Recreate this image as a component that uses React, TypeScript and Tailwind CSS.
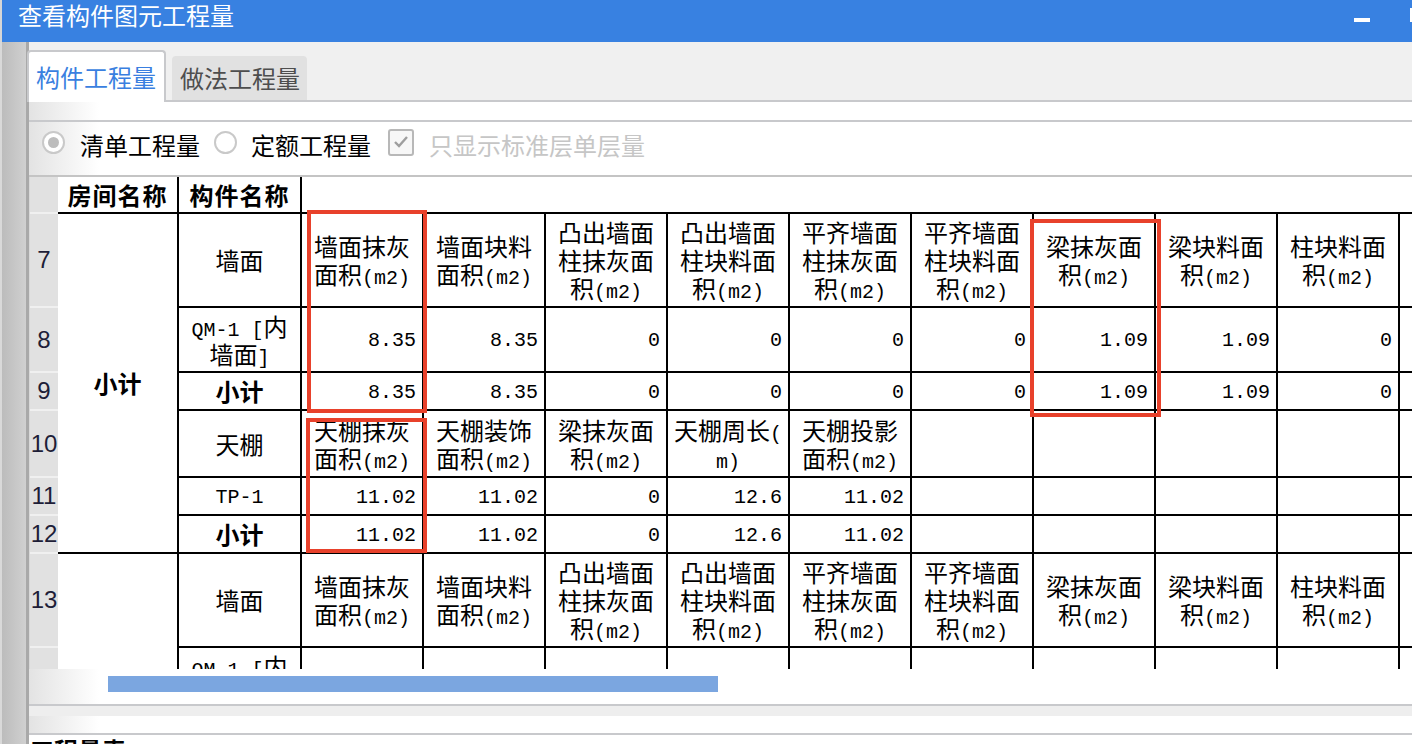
import React from "react";

const CJK = "font-['Noto_Sans_CJK_SC',sans-serif]";
const MONO = "font-['Liberation_Mono',monospace] text-[20px] leading-[20px]";

function Mixed({ s }: { s: string }) {
  const parts = s.match(/[\x20-\x7e]+|[^\x20-\x7e]+/g) ?? [];
  return (
    <>
      {parts.map((p, i) =>
        /^[\x20-\x7e]+$/.test(p) ? (
          <span key={i} className="font-['Liberation_Mono',monospace] text-[20px] leading-[20px] whitespace-pre">
            {p}
          </span>
        ) : (
          <span key={i}>{p}</span>
        )
      )}
    </>
  );
}

const cell = "border-r-2 border-b-2 border-black bg-white p-0 overflow-hidden";

function HeadCell({ lines }: { lines: string[] }) {
  return (
    <td className={cell + " text-center align-middle"}>
      <div className="leading-[28px]">
        {lines.map((l, i) => (
          <div key={i} className="h-[28px] whitespace-nowrap">
            <Mixed s={l} />
          </div>
        ))}
      </div>
    </td>
  );
}

function NumCell({ v }: { v: string }) {
  return (
    <td className={cell + " text-right align-middle pr-[6px] pt-[3px] font-['Liberation_Mono',monospace] text-[20px] leading-[22px]"}>
      {v}
    </td>
  );
}

function Blank() {
  return <td className={cell} />;
}

function RowHdr({ n }: { n?: string }) {
  return (
    <td className="bg-[#e1e1e1] border-b-2 border-[#f0f0f0] p-0 text-center align-middle font-['Liberation_Sans',sans-serif] text-[24px] leading-[26px] text-[#1e1e38]">
      {n}
    </td>
  );
}

const wallHeads: string[][] = [
  ["墙面抹灰", "面积(m2)"],
  ["墙面块料", "面积(m2)"],
  ["凸出墙面", "柱抹灰面", "积(m2)"],
  ["凸出墙面", "柱块料面", "积(m2)"],
  ["平齐墙面", "柱抹灰面", "积(m2)"],
  ["平齐墙面", "柱块料面", "积(m2)"],
  ["梁抹灰面", "积(m2)"],
  ["梁块料面", "积(m2)"],
  ["柱块料面", "积(m2)"],
];

const wallVals = ["8.35", "8.35", "0", "0", "0", "0", "1.09", "1.09", "0"];

const ceilHeads: string[][] = [
  ["天棚抹灰", "面积(m2)"],
  ["天棚装饰", "面积(m2)"],
  ["梁抹灰面", "积(m2)"],
  ["天棚周长(", "m)"],
  ["天棚投影", "面积(m2)"],
];
const ceilVals = ["11.02", "11.02", "0", "12.6", "11.02"];

function Radio({ checked }: { checked?: boolean }) {
  return (
    <div className="-mt-[5px] flex h-[23px] w-[23px] items-center justify-center rounded-full border-2 border-[#c9c9c9] bg-white">
      {checked && <div className="h-[11px] w-[11px] rounded-full bg-[#bdbdbd]" />}
    </div>
  );
}

function QmCell() {
  return (
    <td className={cell + " text-center align-middle leading-[28px]"}>
      <div className="h-[28px] whitespace-nowrap">
        <Mixed s="QM-1 [内" />
      </div>
      <div className="h-[28px] whitespace-nowrap">
        墙面<span className={MONO}>]</span>
      </div>
    </td>
  );
}

export default function App() {
  const gradWhite = "bg-[linear-gradient(to_right,#e3e3e3,#ffffff_70px)]";
  return (
    <div className={"relative h-[744px] w-[1412px] overflow-hidden bg-[#f0f0f0] " + CJK}>
      {/* title bar */}
      <div className="flex h-[42px]">
        <div className="w-[2px] bg-[#d6d6d6]" />
        <div className="relative flex-1 bg-[#3881e1]">
          <div className="pl-[16px] text-[24px] leading-[30px] text-white">查看构件图元工程量</div>
          <div className="absolute left-[1352px] top-[18px] h-[4px] w-[16px] bg-white" />
          <div className="absolute left-[1408px] top-[8px] h-[14px] w-[2px] bg-white" />
        </div>
      </div>

      <div className="flex h-[702px]">
        {/* left rail */}
        <div className="flex w-[29px] shrink-0">
          <div className="w-[2px] bg-[#d9d9d9]" />
          <div className="w-[24px] bg-linear-to-r from-[#bcbcbc] to-[#d0d0d0]" />
          <div className="w-[3px] bg-[#a9a9a9]" />
        </div>

        {/* main */}
        <div className="flex w-[1383px] flex-col">
          {/* tabs */}
          <div className="flex h-[60px] items-end border-b-2 border-[#c8c9cc]">
            <div className="-mb-[2px] -ml-[2px] flex h-[52px] w-[139px] items-center rounded-t-[4px] border-2 border-b-0 border-[#c8c9cc] bg-white pl-[7px] text-[24px] text-[#3a7fe0]">
              构件工程量
            </div>
            <div className="ml-[6px] flex h-[44px] w-[135px] items-center rounded-t-[4px] bg-[#e1e1e1] pl-[8px] text-[24px] text-[#4e4e4e]">
              做法工程量
            </div>
          </div>
          <div className={"h-[18px] " + gradWhite} />
          <div className="h-[2px] bg-[#c8c9cc]" />
          {/* options */}
          <div className={"flex h-[53px] items-center pb-[8px] text-[24px] leading-[30px] " + gradWhite}>
            <div className="ml-[13px]">
              <Radio checked />
            </div>
            <span className="ml-[15px] text-black">清单工程量</span>
            <div className="ml-[14px]">
              <Radio />
            </div>
            <span className="ml-[14px] text-black">定额工程量</span>
            <div className="-mt-[5px] ml-[17px] flex h-[27px] w-[26px] items-center justify-center rounded-[3px] border-2 border-[#b8b8b8] bg-[#f7f7f7]">
              <svg width="16" height="14" viewBox="0 0 16 14">
                <polyline points="2,7 6,11 14,2" fill="none" stroke="#9e9e9e" strokeWidth="2.4" />
              </svg>
            </div>
            <span className="ml-[15px] text-[#c6c6c6]">只显示标准层单层量</span>
          </div>
          <div className="h-[2px] bg-[#c4c4c4]" />

          {/* table */}
          <div className="relative h-[492px] overflow-hidden bg-[#d8d8d8] pl-[1px]">
            <table className="w-[1492px] table-fixed border-separate border-spacing-0 text-[24px] leading-[28px] text-black">
              <colgroup>
                <col className="w-[28px]" />
                <col className="w-[121px]" />
                <col className="w-[123px]" />
                {Array.from({ length: 10 }).map((_, i) => (
                  <col key={i} className="w-[122px]" />
                ))}
              </colgroup>
              <tbody>
                <tr className="h-[37px]">
                  <RowHdr />
                  <td className="border-r-2 border-b-2 border-black bg-white p-0 text-center align-middle font-bold tracking-[1px]">
                    房间名称
                  </td>
                  <td className="border-r-2 border-b-2 border-black bg-white p-0 text-center align-middle font-bold tracking-[1px]">
                    构件名称
                  </td>
                  <td colSpan={10} className="border-b-2 border-black bg-white p-0" />
                </tr>
                <tr className="h-[94px]">
                  <RowHdr n="7" />
                  <td rowSpan={6} className={cell + " text-center align-middle font-bold"}>
                    小计
                  </td>
                  <td className={cell + " text-center align-middle"}>墙面</td>
                  {wallHeads.map((h, i) => (
                    <HeadCell key={i} lines={h} />
                  ))}
                  <Blank />
                </tr>
                <tr className="h-[65px]">
                  <RowHdr n="8" />
                  <QmCell />
                  {wallVals.map((v, i) => (
                    <NumCell key={i} v={v} />
                  ))}
                  <Blank />
                </tr>
                <tr className="h-[38px]">
                  <RowHdr n="9" />
                  <td className={cell + " text-center align-middle font-bold"}>小计</td>
                  {wallVals.map((v, i) => (
                    <NumCell key={i} v={v} />
                  ))}
                  <Blank />
                </tr>
                <tr className="h-[67px]">
                  <RowHdr n="10" />
                  <td className={cell + " text-center align-middle"}>天棚</td>
                  {ceilHeads.map((h, i) => (
                    <HeadCell key={i} lines={h} />
                  ))}
                  {Array.from({ length: 5 }).map((_, i) => (
                    <Blank key={i} />
                  ))}
                </tr>
                <tr className="h-[38px]">
                  <RowHdr n="11" />
                  <td className={cell + " text-center align-middle pt-[3px] " + MONO}>TP-1</td>
                  {ceilVals.map((v, i) => (
                    <NumCell key={i} v={v} />
                  ))}
                  {Array.from({ length: 5 }).map((_, i) => (
                    <Blank key={i} />
                  ))}
                </tr>
                <tr className="h-[38px]">
                  <RowHdr n="12" />
                  <td className={cell + " text-center align-middle font-bold"}>小计</td>
                  {ceilVals.map((v, i) => (
                    <NumCell key={i} v={v} />
                  ))}
                  {Array.from({ length: 5 }).map((_, i) => (
                    <Blank key={i} />
                  ))}
                </tr>
                <tr className="h-[94px]">
                  <RowHdr n="13" />
                  <td rowSpan={2} className="border-r-2 border-black bg-white p-0" />
                  <td className={cell + " text-center align-middle"}>墙面</td>
                  {wallHeads.map((h, i) => (
                    <HeadCell key={i} lines={h} />
                  ))}
                  <Blank />
                </tr>
                <tr className="h-[65px]">
                  <RowHdr />
                  <QmCell />
                  {Array.from({ length: 10 }).map((_, i) => (
                    <Blank key={i} />
                  ))}
                </tr>
              </tbody>
            </table>

            {/* red annotation boxes */}
            <div className="pointer-events-none absolute left-[278px] top-[33px] h-[203px] w-[120px] border-4 border-[#e8412b]" />
            <div className="pointer-events-none absolute left-[277px] top-[241px] h-[135px] w-[121px] border-4 border-[#e8412b]" />
            <div className="pointer-events-none absolute left-[1001px] top-[42px] h-[198px] w-[131px] border-4 border-[#e8412b]" />
          </div>

          {/* horizontal scrollbar */}
          <div className={"h-[35px] pt-[7px] " + gradWhite}>
            <div className="ml-[79px] h-[16px] w-[610px] bg-[#7ba6e0]" />
          </div>
          <div className="h-[2px] bg-[#c8c9cc]" />
          <div className="h-[10px] bg-[#eeeeee]" />
          <div className={"h-[17px] " + gradWhite} />
          <div className="h-[2px] bg-[#c8c9cc]" />
          <div className="flex-1 overflow-hidden bg-white">
            <div className="ml-[1px] mt-[3px] text-[24px] font-bold leading-[24px] text-black">工程量表</div>
          </div>
        </div>
      </div>
    </div>
  );
}
